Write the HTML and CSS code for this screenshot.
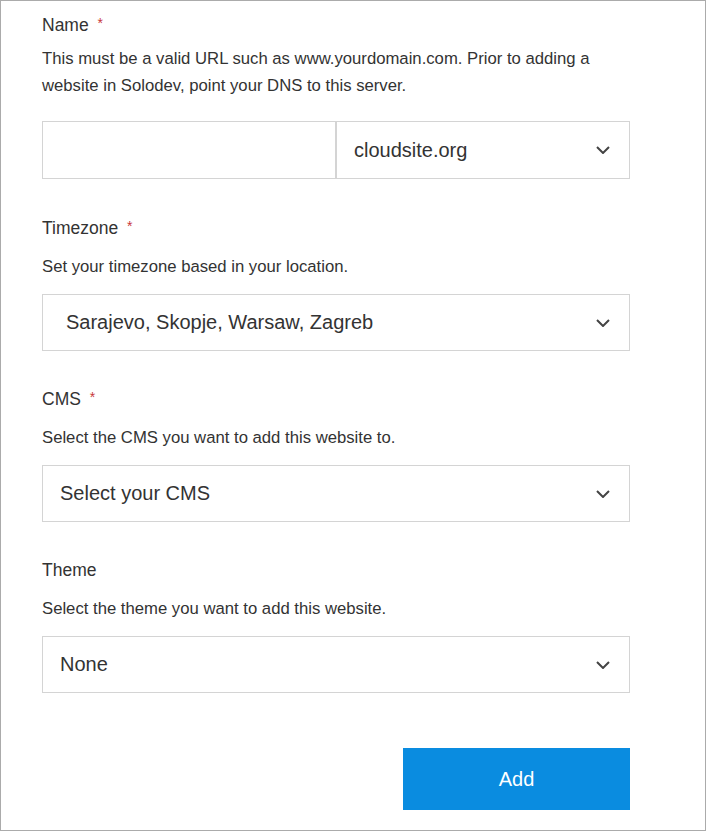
FILE: index.html
```html
<!DOCTYPE html>
<html lang="en">
<head>
<meta charset="utf-8">
<title>Add website</title>
<link rel="stylesheet" href="styles.css">
</head>
<body>
<div class="frame">
  <form class="form">
    <div class="field field-name">
      <label class="label">Name <span class="req">*</span></label>
      <p class="desc desc-name">This must be a valid URL such as www.yourdomain.com. Prior to adding a website in Solodev, point your DNS to this server.</p>
      <div class="combo">
        <div class="box input"></div>
        <div class="box select select-half">
          <span class="value">cloudsite.org</span>
          <svg class="chev" width="14" height="8" viewBox="0 0 14 8"><path d="M1 1l6 6 6-6" fill="none" stroke="#444" stroke-width="2"/></svg>
        </div>
      </div>
    </div>

    <div class="field">
      <label class="label">Timezone <span class="req">*</span></label>
      <p class="desc">Set your timezone based in your location.</p>
      <div class="box select select-tz">
        <span class="value">Sarajevo, Skopje, Warsaw, Zagreb</span>
        <svg class="chev" width="14" height="8" viewBox="0 0 14 8"><path d="M1 1l6 6 6-6" fill="none" stroke="#444" stroke-width="2"/></svg>
      </div>
    </div>

    <div class="field">
      <label class="label">CMS <span class="req">*</span></label>
      <p class="desc">Select the CMS you want to add this website to.</p>
      <div class="box select">
        <span class="value">Select your CMS</span>
        <svg class="chev" width="14" height="8" viewBox="0 0 14 8"><path d="M1 1l6 6 6-6" fill="none" stroke="#444" stroke-width="2"/></svg>
      </div>
    </div>

    <div class="field">
      <label class="label">Theme</label>
      <p class="desc">Select the theme you want to add this website.</p>
      <div class="box select">
        <span class="value">None</span>
        <svg class="chev" width="14" height="8" viewBox="0 0 14 8"><path d="M1 1l6 6 6-6" fill="none" stroke="#444" stroke-width="2"/></svg>
      </div>
    </div>

    <div class="actions">
      <button type="button" class="btn">Add</button>
    </div>
  </form>
</div>
</body>
</html>
```
FILE: styles.css
```css
* { box-sizing: border-box; }
html, body { margin: 0; padding: 0; background: #fff; }
body { font-family: "Liberation Sans", Arial, sans-serif; color: #333; }

.frame {
  width: 706px;
  height: 831px;
  border: 1px solid #ababab;
  padding: 12px 0 0 41px;
}

.form { width: 588px; display: flex; flex-direction: column; }

.field { display: flex; flex-direction: column; margin-bottom: 36px; }
.field-name { margin-bottom: 37px; }

.label {
  display: block;
  height: 24px;
  font-size: 17.5px;
  line-height: 24px;
  color: #333;
}
.req {
  color: #c8363a;
  font-size: 14px;
  line-height: 1;
  margin-left: 4px;
  vertical-align: 3px;
}

.desc {
  margin: 13px 0 14px;
  font-size: 16.7px;
  line-height: 27px;
  color: #333;
}
.desc-name { margin: 8px 0 22px; }

.combo { display: flex; }
.combo .box { height: 58px; }

.box {
  height: 57px;
  border: 1px solid #d4d4d4;
  background: #fff;
}
.input { width: 294px; }
.select {
  display: flex;
  align-items: center;
  justify-content: space-between;
  padding: 0 19px 0 17px;
  font-size: 20px;
  color: #333;
}
.select-half { width: 294px; }
.select-tz { padding-left: 23px; }

.chev { display: block; flex: none; }

.actions { display: flex; justify-content: flex-end; margin-top: 19px; }
.btn {
  width: 227px;
  height: 62px;
  border: 0;
  background: #0a8ce0;
  color: #fff;
  font-family: "Liberation Sans", Arial, sans-serif;
  font-size: 20px;
  cursor: pointer;
}
```
